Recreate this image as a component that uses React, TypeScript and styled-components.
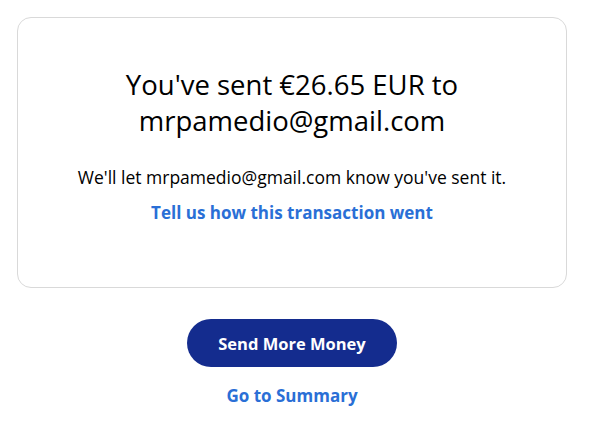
import { FC } from 'react';
import styled, { createGlobalStyle } from 'styled-components';

const GlobalStyle = createGlobalStyle`
  body {
    margin: 0;
    background: #ffffff;
    font-family: "Open Sans", Lato, sans-serif;
    color: #000000;
  }
`;

const Page = styled.main`
  display: flex;
  flex-direction: column;
  align-items: center;
  padding: 17px 24px 17px 17px;
`;

const Card = styled.section`
  box-sizing: border-box;
  width: 100%;
  border: 1px solid #d9d9d9;
  border-radius: 14px;
  padding: 49px 40px 62px;
  display: flex;
  flex-direction: column;
  align-items: center;
  text-align: center;
`;

const Heading = styled.h1`
  margin: 0 0 26px;
  font-size: 27.5px;
  line-height: 36px;
  font-weight: 400;
  color: #000000;
  max-width: 400px;
`;

const Body = styled.p`
  margin: 0 0 12px;
  font-size: 17.5px;
  line-height: 24px;
  color: #000000;
`;

const TextLink = styled.a`
  display: inline-block;
  font-size: 17px;
  line-height: 24px;
  font-weight: 700;
  color: #2a6fd6;
  text-decoration: none;
  cursor: pointer;
`;

const Actions = styled.div`
  display: flex;
  flex-direction: column;
  align-items: center;
  margin-top: 31px;
  gap: 17px;
`;

const Button = styled.button`
  height: 48px;
  padding: 0 31.5px;
  border: none;
  border-radius: 24px;
  background: #142c8e;
  color: #ffffff;
  font-family: inherit;
  font-size: 16.5px;
  font-weight: 700;
  cursor: pointer;
`;

const App: FC = () => (
  <>
    <GlobalStyle />
    <Page>
      <Card>
        <Heading>You've sent €26.65 EUR to mrpamedio@gmail.com</Heading>
        <Body>We'll let mrpamedio@gmail.com know you've sent it.</Body>
        <TextLink>Tell us how this transaction went</TextLink>
      </Card>
      <Actions>
        <Button>Send More Money</Button>
        <TextLink>Go to Summary</TextLink>
      </Actions>
    </Page>
  </>
);

export default App;
